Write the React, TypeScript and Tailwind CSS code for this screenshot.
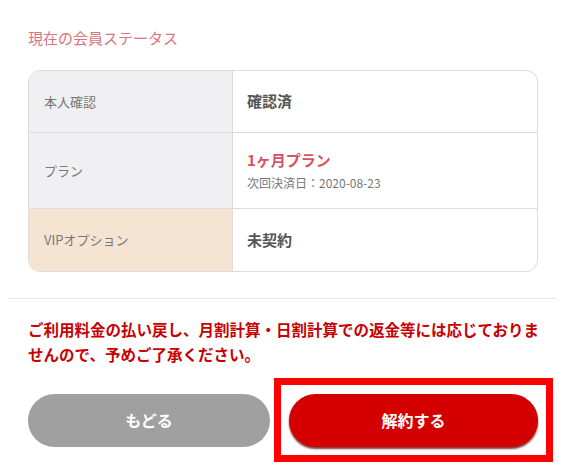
import React from "react";

const font = { fontFamily: '"Noto Sans CJK JP", "Noto Sans", sans-serif' };

type Row = {
  label: string;
  labelBg: string;
  height: string;
  value: React.ReactNode;
};

const rows: Row[] = [
  {
    label: "本人確認",
    labelBg: "bg-[#f0f0f2]",
    height: "h-[62px]",
    value: <span className="text-[15px] font-bold text-[#555]">確認済</span>,
  },
  {
    label: "プラン",
    labelBg: "bg-[#f0f0f2]",
    height: "h-[76px]",
    value: (
      <div className="flex flex-col gap-[2px]">
        <span className="text-[15px] font-bold text-[#d6525e] leading-[22px]">1ヶ月プラン</span>
        <span className="text-[12px] text-[#777] leading-[20px]">次回決済日：2020-08-23</span>
      </div>
    ),
  },
  {
    label: "VIPオプション",
    labelBg: "bg-[#f6e4d3]",
    height: "h-[62px]",
    value: <span className="text-[15px] font-bold text-[#555]">未契約</span>,
  },
];

export default function App() {
  return (
    <div className="w-[570px] h-[470px] bg-white overflow-hidden" style={font}>
      {/* Section heading */}
      <h2 className="pt-[27px] px-7 text-[15px] leading-[22px] text-[#d9737f]">現在の会員ステータス</h2>

      {/* Status table */}
      <div className="ml-7 w-[510px] mt-[21px] border border-[#dcdcdc] rounded-xl overflow-hidden">
        {rows.map((row, i) => (
          <div
            key={row.label}
            className={`grid grid-cols-[204px_1fr] ${row.height} ${i < rows.length - 1 ? "border-b border-[#dcdcdc]" : ""}`}
          >
            <div className={`${row.labelBg} border-r border-[#dcdcdc] flex items-center pl-[15px] text-[13px] text-[#777]`}>
              {row.label}
            </div>
            <div className="flex items-center pl-[14px]">{row.value}</div>
          </div>
        ))}
      </div>

      {/* Divider */}
      <div className="mt-[26px] ml-2 mr-[13px] border-t border-[#e8e8ea]" />

      {/* Notice */}
      <p className="mt-[18px] px-7 text-[15.5px] leading-[25px] font-bold text-[#c80000]">
        ご利用料金の払い戻し、月割計算・日割計算での返金等には応じておりませんので、予めご了承ください。
      </p>

      {/* Actions */}
      <div className="mt-[11px] ml-7 flex items-center">
        <button className="w-[242px] h-[53px] rounded-full bg-[#a0a0a0] text-white font-bold text-[16px]">
          もどる
        </button>
        <div className="ml-[4px] w-[279px] h-[84px] border-[7px] border-[#ff0000] flex items-center justify-center">
          <button className="w-[249px] h-[53px] rounded-full bg-[#d40000] text-white font-bold text-[16px] shadow-[0_2px_2px_rgba(90,10,10,0.8)]">
            解約する
          </button>
        </div>
      </div>
    </div>
  );
}
